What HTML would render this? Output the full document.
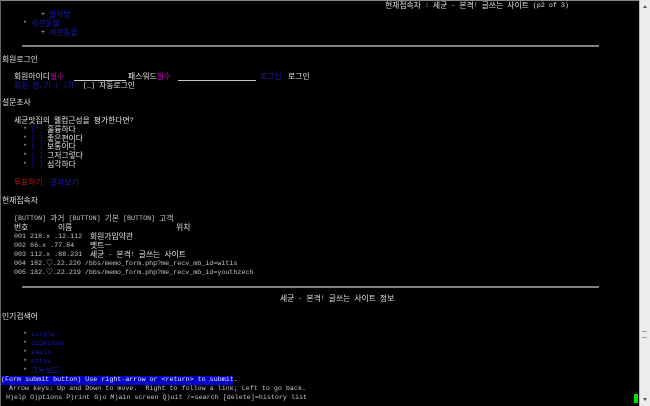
<!DOCTYPE html>
<html><head><meta charset="utf-8"><style>
html,body{margin:0;padding:0;}
body{width:650px;height:406px;background:#000;position:relative;overflow:hidden;font-family:"Liberation Mono","Noto Sans CJK KR",monospace;font-size:6.7px;color:#c8c8c8;}
.l{position:absolute;height:9px;line-height:9px;white-space:pre;}
i{font-style:normal;font-size:7.8px;font-family:"Noto Sans CJK KR","NanumGothic",sans-serif;vertical-align:top;line-height:9px;position:relative;top:-1px;}
.b{color:#1a1ab8;}
.m{color:#c000c0;}
.r{color:#e00000;}
.w{color:#e8e8e8;}
.hr{position:absolute;left:22px;width:577px;height:2px;background:#808080;}
.u{position:absolute;height:1px;background:#c8c8c8;}
</style></head><body>
<div style="position:absolute;left:0;top:0;width:650px;height:1px;background:#888"></div>
<div style="position:absolute;left:0;top:0;width:1px;height:406px;background:#666"></div>
<div style="position:absolute;left:639px;top:0;width:11px;height:406px;background:#ececec;border-left:1px solid #bbb"></div>
<div style="position:absolute;left:643px;top:5px;width:0;height:0;border-left:2px solid transparent;border-right:2px solid transparent;border-bottom:3px solid #555"></div>
<div style="position:absolute;left:643px;top:398px;width:0;height:0;border-left:2px solid transparent;border-right:2px solid transparent;border-top:3px solid #555"></div>
<div style="position:absolute;left:642px;top:331px;width:5px;height:5px;border-top:1px solid #999;border-bottom:1px solid #999"></div>

<div class="l w" style="left:385px;top:2px"><i>현재접속자</i> : <i>세균</i> - <i>본격</i>! <i>글쓰는</i> <i>사이트</i> (p2 of 3)</div>
<div class="l" style="left:41px;top:11px">+ <i class="b">알자방</i></div>
<div class="l" style="left:23px;top:20px">* <i class="b">세관동물</i></div>
<div class="l" style="left:41px;top:29px">+ <i class="b">세관동물</i></div>
<div class="hr" style="top:45px"></div>

<div class="l w" style="left:2px;top:56px"><i>회원로그인</i></div>
<div class="l w" style="left:14px;top:73px"><i>회원아이디</i><i class="m">필수</i></div>
<div class="u" style="left:74px;top:80px;width:52px"></div>
<div class="l w" style="left:128px;top:73px"><i>패스워드</i><i class="m">필수</i></div>
<div class="u" style="left:178px;top:80px;width:78px"></div>
<div class="l b" style="left:260px;top:73px"><i>로그인</i></div>
<div class="l w" style="left:288px;top:73px"><i>로그인</i></div>
<div class="l b" style="left:14px;top:82px"><i>회원</i>,<i>정</i>,<i>기</i> [ ]<i>기</i></div>
<div class="l w" style="left:83px;top:82px">[_] <i>자동로그인</i></div>

<div class="l w" style="left:2px;top:99px"><i>설문조사</i></div>
<div class="l w" style="left:14px;top:117px"><i>세균맛집의</i> <i>웰컴근성을</i> <i>평가한다면</i>?</div>
<div class="l" style="left:23px;top:126px">* <span class="b">[*]</span> <i class="w">훌륭하다</i></div>
<div class="l" style="left:23px;top:135px">* <span class="b">[ ]</span> <i class="w">좋은편이다</i></div>
<div class="l" style="left:23px;top:143px">* <span class="b">[ ]</span> <i class="w">보통이다</i></div>
<div class="l" style="left:23px;top:152px">* <span class="b">[ ]</span> <i class="w">그저그렇다</i></div>
<div class="l" style="left:23px;top:161px">* <span class="b">[ ]</span> <i class="w">심각하다</i></div>
<div class="l r" style="left:14px;top:179px"><i>투표하기</i></div>
<div class="l b" style="left:50px;top:179px"><i>결과보기</i></div>

<div class="l w" style="left:2px;top:197px"><i>현재접속자</i></div>
<div class="l" style="left:14px;top:215px">[BUTTON] <i>과거</i> [BUTTON] <i>기본</i> [BUTTON] <i>고객</i></div>
<div class="l w" style="left:14px;top:224px"><i>번호</i></div>
<div class="l w" style="left:58px;top:224px"><i>이름</i></div>
<div class="l w" style="left:176px;top:224px"><i>위치</i></div>
<div class="l" style="left:14px;top:233px">001 218.x .12.112</div><div class="l w" style="left:90px;top:233px"><i>회원가입약관</i></div>
<div class="l" style="left:14px;top:242px">002 66.x .77.84</div><div class="l w" style="left:90px;top:242px"><i>멧트ㅡ</i></div>
<div class="l" style="left:14px;top:251px">003 112.x .88.231</div><div class="l w" style="left:90px;top:251px"><i>세균</i> - <i>본격</i>! <i>글쓰는</i> <i>사이트</i></div>
<div class="l" style="left:14px;top:260px">004 182.♡.22.220 /bbs/memo_form.php?me_recv_mb_id=witis</div>
<div class="l" style="left:14px;top:269px">005 182.♡.22.219 /bbs/memo_form.php?me_recv_mb_id=youthzech</div>
<div class="hr" style="top:286px"></div>

<div class="l w" style="left:280px;top:295px"><i>세균</i> - <i>본격</i>! <i>글쓰는</i> <i>사이트</i> <i>정보</i></div>
<div class="l w" style="left:2px;top:313px"><i>인기검색어</i></div>
<div class="l" style="left:23px;top:331px">* <span class="b">sirgle</span></div>
<div class="l" style="left:23px;top:340px">* <span class="b">digkstnd</span></div>
<div class="l" style="left:23px;top:349px">* <span class="b">kapls</span></div>
<div class="l" style="left:23px;top:358px">* <span class="b">https</span></div>
<div class="l" style="left:23px;top:367px">* <i class="b">그누보드</i></div>

<div class="l" style="left:1px;top:376px;width:232px;background:#0000c8;color:#f0f0f0">(Form submit button) Use right-arrow or &lt;return&gt; to submit.</div>
<div class="l" style="left:9px;top:385px">Arrow keys: Up and Down to move.  Right to follow a link; Left to go back.</div>
<div class="l" style="left:6px;top:394px">H)elp O)ptions P)rint G)o M)ain screen Q)uit /=search [delete]=history list</div>
<div style="position:absolute;left:634px;top:394px;width:4px;height:9px;background:#00e000"></div>
</body></html>
